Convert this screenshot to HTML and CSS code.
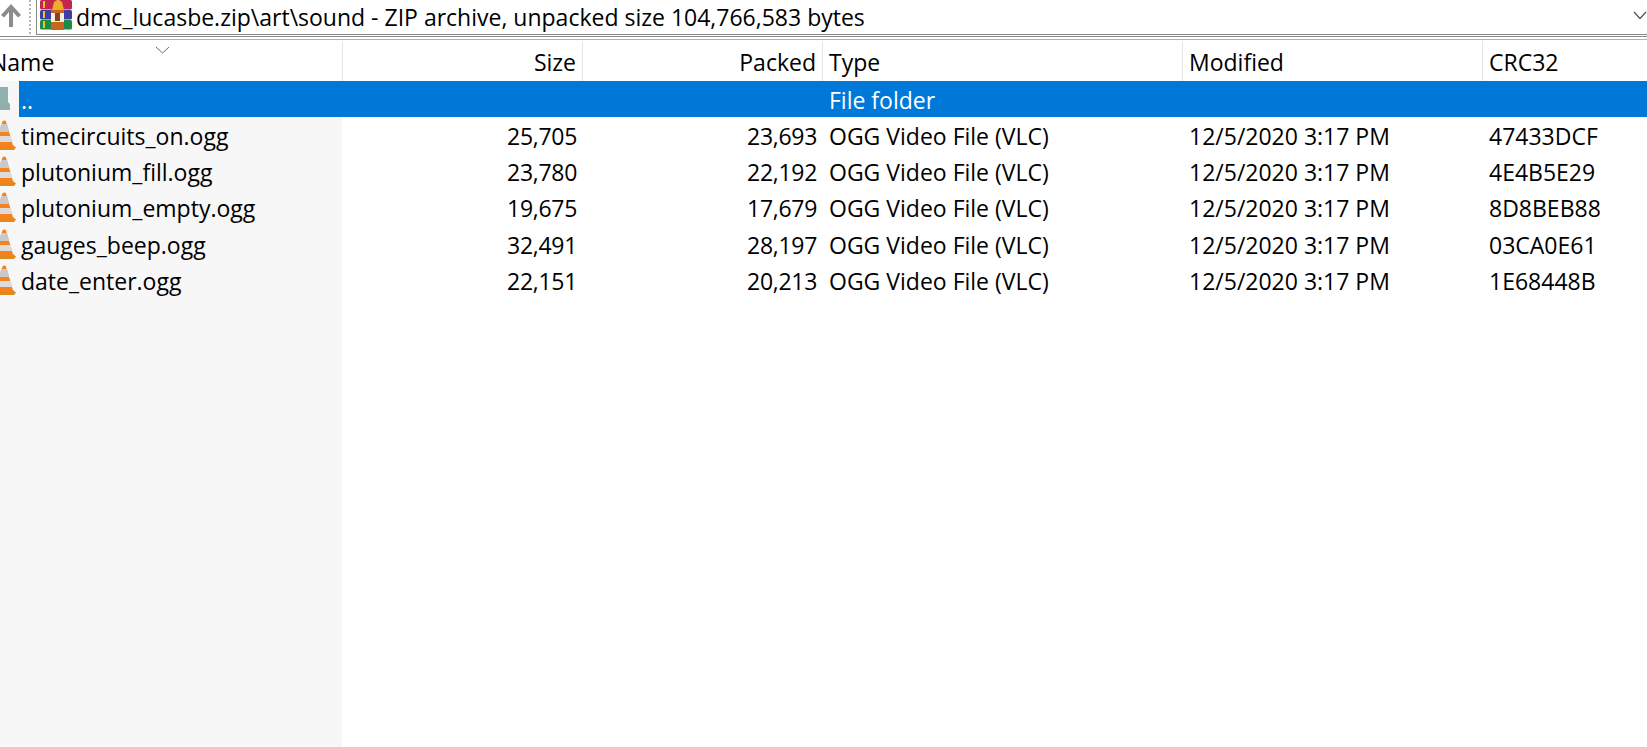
FILE: index.html
```html
<!DOCTYPE html>
<html lang="en">
<head>
<meta charset="utf-8">
<title>dmc_lucasbe.zip</title>
<link rel="stylesheet" href="styles.css">
</head>
<body>
<div class="app">
  <div class="toolbar">
    <svg class="up" width="22" height="24" viewBox="0 0 22 24"><path d="M11 1 L21 12 L18 14.500 L13 9 V24 H9 V9 L4 14.500 L1 12 Z" fill="#8c8c8c"/></svg>
    <div class="grip"></div>
    <div class="address">
      <svg class="rar" width="34" height="32" viewBox="0 0 34 32">
        <rect x="1" y="0" width="32" height="9.500" rx="1.500" fill="#c2264f"/>
        <rect x="1" y="10" width="32" height="9.500" rx="1.500" fill="#3d3fa3"/>
        <rect x="1" y="20" width="32" height="9.500" rx="1.500" fill="#1d8a45"/>
        <rect x="4" y="1" width="2" height="7" fill="#f0c419"/>
        <rect x="4" y="11" width="2" height="7" fill="#f0c419"/>
        <rect x="4" y="21" width="2" height="7" fill="#f0c419"/>
        <rect x="12" y="9" width="13" height="21" fill="#c8651f"/>
        <path d="M13 10 L15 2 L18 0 H20 L23 2 L25 10 Z" fill="#efab2a"/>
        <rect x="12" y="13" width="13" height="9" fill="#f4f0e6"/>
        <rect x="16" y="13" width="5" height="8" fill="#8a4315"/>
      </svg>
      <span class="path">dmc_lucasbe.zip\art\sound - ZIP archive, unpacked size 104,766,583 bytes</span>
      <svg class="chev-top" width="14" height="9" viewBox="0 0 14 9"><path d="M1 1 L7 7.500 L13 1" fill="none" stroke="#555" stroke-width="1.200"/></svg>
    </div>
  </div>
  <div class="rule"></div>
  <div class="head">
    <div class="hc name">Name<svg class="chev-sort" width="15" height="8" viewBox="0 0 15 8"><path d="M1 1 L7.500 7 L14 1" fill="none" stroke="#6b6b6b" stroke-width="1"/></svg></div>
    <div class="hc num">Size</div>
    <div class="hc num">Packed</div>
    <div class="hc">Type</div>
    <div class="hc">Modified</div>
    <div class="hc last">CRC32</div>
  </div>
  <div class="list">
    <div class="row up-row">
      <div class="c name"><svg class="ico" width="17" height="30" viewBox="0 0 17 30"><path d="M0 3 H9 V18 L11 20 V26 H0 Z" fill="#8fb0ad"/></svg><span class="sel">..</span></div>
      <div class="c num sel-c"></div><div class="c num sel-c"></div><div class="c sel-c">File folder</div><div class="c sel-c"></div><div class="c sel-c last"></div>
    </div>
    <div class="row">
      <div class="c name"><svg class="ico" width="17" height="30" viewBox="0 0 17 30"><use href="#cone"/></svg><span>timecircuits_on.ogg</span></div>
      <div class="c num"><span class="digits">25,705</span></div><div class="c num"><span class="digits">23,693</span></div><div class="c">OGG Video File (VLC)</div><div class="c">12/5/2020 3:17 PM</div><div class="c last">47433DCF</div>
    </div>
    <div class="row">
      <div class="c name"><svg class="ico" width="17" height="30" viewBox="0 0 17 30"><use href="#cone"/></svg><span>plutonium_fill.ogg</span></div>
      <div class="c num"><span class="digits">23,780</span></div><div class="c num"><span class="digits">22,192</span></div><div class="c">OGG Video File (VLC)</div><div class="c">12/5/2020 3:17 PM</div><div class="c last">4E4B5E29</div>
    </div>
    <div class="row">
      <div class="c name"><svg class="ico" width="17" height="30" viewBox="0 0 17 30"><use href="#cone"/></svg><span>plutonium_empty.ogg</span></div>
      <div class="c num"><span class="digits">19,675</span></div><div class="c num"><span class="digits">17,679</span></div><div class="c">OGG Video File (VLC)</div><div class="c">12/5/2020 3:17 PM</div><div class="c last">8D8BEB88</div>
    </div>
    <div class="row">
      <div class="c name"><svg class="ico" width="17" height="30" viewBox="0 0 17 30"><use href="#cone"/></svg><span>gauges_beep.ogg</span></div>
      <div class="c num"><span class="digits">32,491</span></div><div class="c num"><span class="digits">28,197</span></div><div class="c">OGG Video File (VLC)</div><div class="c">12/5/2020 3:17 PM</div><div class="c last">03CA0E61</div>
    </div>
    <div class="row">
      <div class="c name"><svg class="ico" width="17" height="30" viewBox="0 0 17 30"><use href="#cone"/></svg><span>date_enter.ogg</span></div>
      <div class="c num"><span class="digits">22,151</span></div><div class="c num"><span class="digits">20,213</span></div><div class="c">OGG Video File (VLC)</div><div class="c">12/5/2020 3:17 PM</div><div class="c last">1E68448B</div>
    </div>
  </div>
</div>
<svg class="defs" width="0" height="0">
  <defs>
    <g id="cone">
      <path d="M0 25 H14 L17 27.500 L15 30 H0 Z" fill="#e08a1e"/>
      <path d="M3.500 1.500 Q5.500 -0.500 7 1.500 L14.500 27 H0 V12 Z" fill="#f5821f"/>
      <path d="M2.500 4 H8 L10.300 12 H0 V10 Z" fill="#c9c9c9"/>
      <path d="M0 16 H11.500 L13.200 22 H0 Z" fill="#dcdcdc"/>
    </g>
  </defs>
</svg>
</body>
</html>
```

FILE: styles.css
```css
html, body {
  margin: 0;
  height: 100%;
  overflow: hidden;
  background: #fff;
}
.app {
  display: flex;
  flex-direction: column;
  height: 747px;
  font-family: "Open Sans", "Noto Sans", "Liberation Sans", sans-serif;
  font-size: 23px;
  color: #000;
}
.defs {
  position: absolute;
}
.toolbar {
  display: flex;
  height: 35px;
  overflow: hidden;
  flex: none;
}
.up {
  margin: 3px 0 0 0;
  flex: none;
}
.grip {
  width: 2px;
  margin-left: 7px;
  height: 35px;
  flex: none;
  background: repeating-linear-gradient(to bottom, #b5b5b5 0 2px, transparent 2px 4px);
}
.address {
  flex: 1;
  margin-left: 5px;
  display: flex;
  align-items: flex-start;
  border-left: 1px solid #8a8a8a;
  border-bottom: 1px solid #8a8a8a;
  height: 34px;
  min-width: 0;
}
.rar {
  flex: none;
  margin-left: 2px;
}
.path {
  margin-left: 3px;
  line-height: 34px;
  white-space: nowrap;
  flex: 1;
}
.chev-top {
  margin: 11px 0 0 0;
  flex: none;
}
.rule {
  height: 2px;
  margin-top: 1px;
  border-top: 1px solid #8c8c8c;
  border-bottom: 1px solid #b0b0b0;
  flex: none;
}
.head, .row {
  display: grid;
  grid-template-columns: 343px 240px 240px 360px 300px 1fr;
  flex: none;
}
.head {
  height: 40px;
  margin-top: 1px;
}
.hc {
  position: relative;
  box-sizing: border-box;
  height: 40px;
  border-right: 1px solid #e5e5e5;
  padding: 0 6px;
  line-height: 43px;
  white-space: nowrap;
}
.hc.name {
  padding-left: 0;
  text-indent: -10px;
  overflow: hidden;
}
.hc.last, .c.last {
  border-right: 0;
  padding-right: 0;
}
.chev-sort {
  position: absolute;
  left: 155px;
  top: 5px;
}
.list {
  flex: 1;
  background: linear-gradient(to right, #f7f7f7 342px, #fff 342px);
}
.row {
  height: 36.200px;
}
.up-row {
  height: 36px;
}
.c {
  box-sizing: border-box;
  height: 36px;
  padding: 2px 6px 0;
  line-height: 35px;
  white-space: nowrap;
}
.num {
  text-align: right;
  padding-right: 6px;
}
.digits {
  letter-spacing: -0.3px;
}
.c.name {
  display: flex;
  padding: 0;
  overflow: hidden;
}
.ico {
  flex: none;
  margin-top: 3px;
  margin-right: 5px;
  margin-left: -1px;
}
.name span {
  flex: 1;
  padding-top: 2px;
}
.sel {
  background: #0078d7;
  color: #fff;
  margin-left: -2px;
  padding-left: 2px;
}
.sel-c {
  background: #0078d7;
  color: #fff;
}
```
